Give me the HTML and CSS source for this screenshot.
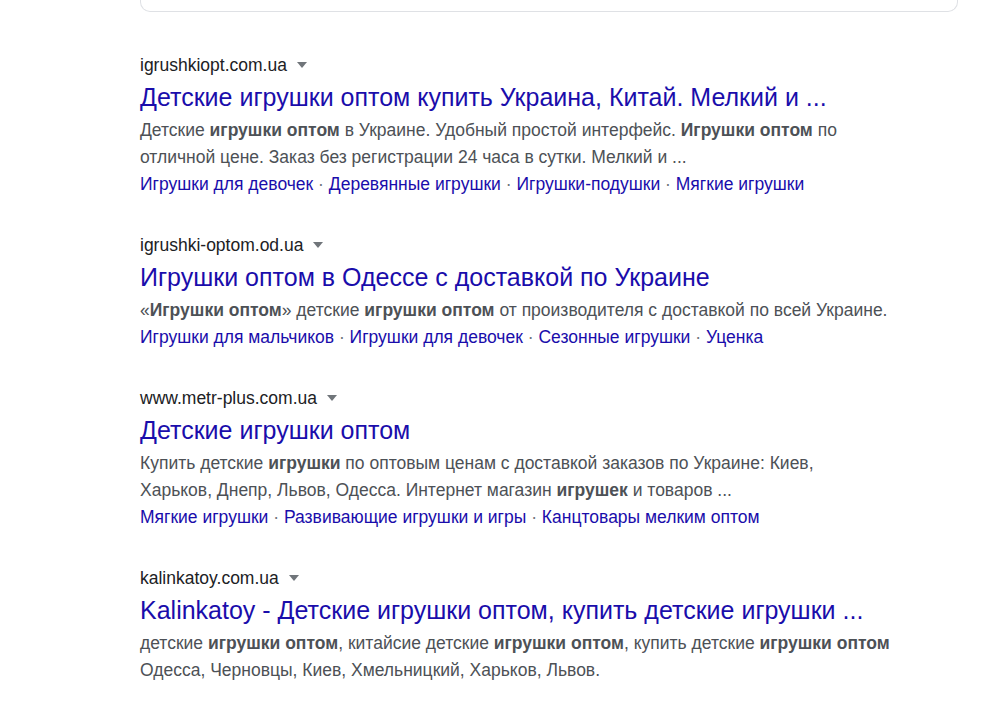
FILE: index.html
```html
<!DOCTYPE html>
<html lang="ru">
<head>
<meta charset="UTF-8" />
<title>игрушки оптом - Поиск</title>
<link rel="stylesheet" href="styles.css">
</head>
<body>
  <div class="page">
    <div class="top-card"></div>

    <div class="results">
      <div class="result">
        <div class="cite">igrushkiopt.com.ua <span class="arrow"></span></div>
        <a class="title" href="#">Детские игрушки оптом купить Украина, Китай. Мелкий и ...</a>
        <div class="snippet">Детские <b>игрушки оптом</b> в Украине. Удобный простой интерфейс. <b>Игрушки оптом</b> по отличной цене. Заказ без регистрации 24 часа в сутки. Мелкий и ...</div>
        <div class="sitelinks">
          <a href="#">Игрушки для девочек</a> · <a href="#">Деревянные игрушки</a> · <a href="#">Игрушки-подушки</a> · <a href="#">Мягкие игрушки</a>
        </div>
      </div>

      <div class="result">
        <div class="cite">igrushki-optom.od.ua <span class="arrow"></span></div>
        <a class="title" href="#">Игрушки оптом в Одессе с доставкой по Украине</a>
        <div class="snippet">«<b>Игрушки оптом</b>» детские <b>игрушки оптом</b> от производителя с доставкой по всей Украине.</div>
        <div class="sitelinks">
          <a href="#">Игрушки для мальчиков</a> · <a href="#">Игрушки для девочек</a> · <a href="#">Сезонные игрушки</a> · <a href="#">Уценка</a>
        </div>
      </div>

      <div class="result">
        <div class="cite">www.metr-plus.com.ua <span class="arrow"></span></div>
        <a class="title" href="#">Детские игрушки оптом</a>
        <div class="snippet">Купить детские <b>игрушки</b> по оптовым ценам с доставкой заказов по Украине: Киев,<br>Харьков, Днепр, Львов, Одесса. Интернет магазин <b>игрушек</b> и товаров ...</div>
        <div class="sitelinks">
          <a href="#">Мягкие игрушки</a> · <a href="#">Развивающие игрушки и игры</a> · <a href="#">Канцтовары мелким оптом</a>
        </div>
      </div>

      <div class="result">
        <div class="cite">kalinkatoy.com.ua <span class="arrow"></span></div>
        <a class="title" href="#">Kalinkatoy - Детские игрушки оптом, купить детские игрушки ...</a>
        <div class="snippet">детские <b>игрушки оптом</b>, китайсие детские <b>игрушки оптом</b>, купить детские <b>игрушки оптом</b> Одесса, Черновцы, Киев, Хмельницкий, Харьков, Львов.</div>
      </div>
    </div>
  </div>
</body>
</html>
```

FILE: styles.css
```css
body, html {
  margin: 0;
  padding: 0;
  background: #fff;
  font-family: "Liberation Sans", Arial, sans-serif;
}
.page {
  padding-left: 140px;
  width: 818px;
}
.top-card {
  height: 12px;
  border: 1px solid #dfe1e5;
  border-top: none;
  border-radius: 0 0 10px 10px;
  box-sizing: border-box;
}
.results {
  padding-top: 40px;
  width: 752px;
}
.result {
  margin-bottom: 34px;
}
.cite {
  font-size: 17.5px;
  line-height: 26px;
  color: #202124;
  display: flex;
  align-items: center;
}
.arrow {
  display: inline-block;
  margin-left: 10px;
  width: 0;
  height: 0;
  border-left: 5px solid transparent;
  border-right: 5px solid transparent;
  border-top: 6px solid #70757a;
}
.title {
  display: block;
  font-size: 25px;
  line-height: 39px;
  color: #1a0dab;
  text-decoration: none;
}
.snippet {
  font-size: 17.5px;
  line-height: 27px;
  color: #4d5156;
}
.snippet b {
  color: #4d5156;
}
.sitelinks {
  font-size: 17.5px;
  line-height: 27px;
  color: #70757a;
}
.sitelinks a {
  color: #1a0dab;
  text-decoration: none;
}
```
